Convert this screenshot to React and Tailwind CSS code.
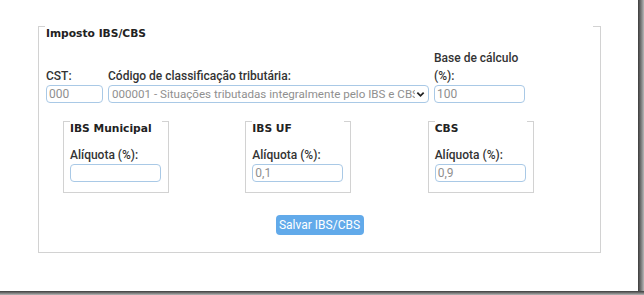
export default function App() {
  const legend = "font-['DejaVu_Sans',Verdana,sans-serif] text-[10.7px] font-bold leading-[14px] text-[#222]";
  const label = "font-['Roboto',sans-serif] text-[12px] font-medium leading-[18px] text-[#333]";
  const input = "h-[18px] border border-[#a9c9e6] rounded-[4px] px-[2px] font-['Roboto',sans-serif] text-[12px] leading-[16px] text-[#8f8f8f] bg-white";

  const taxes = [
    { name: "IBS Municipal", value: "" },
    { name: "IBS UF", value: "0,1" },
    { name: "CBS", value: "0,9" },
  ];

  return (
    <div className="w-[644px] h-[295px] bg-white flex flex-col">
      <div className="flex h-[291px]">
        <div className="w-[638px] h-full pl-[38px] pt-[26px]">
          {/* Imposto IBS/CBS */}
          <div className="w-[563px] h-[227px] border-x border-b border-[#d2d2d2] flex flex-col">
            <div className="flex">
              <div className="w-[6px] border-t border-[#d2d2d2]" />
              <div className="flex-1" />
              <div className="w-[7px] border-t border-[#d2d2d2]" />
            </div>
            <div className="px-[7px] flex flex-col">
              <div className={legend}>Imposto IBS/CBS</div>

              <div className="flex items-end gap-[5px] mt-[8px]">
                <div className="w-[57px] flex flex-col">
                  <span className={label}>CST:</span>
                  <div className={input}>000</div>
                </div>
                <div className="w-[321px] flex flex-col">
                  <span className={label}>Código de classificação tributária:</span>
                  <div className={`${input} pl-[3px] pr-[3px] flex items-center`}>
                    <span className="flex-1 overflow-hidden whitespace-nowrap text-[11.6px]">
                      000001 - Situações tributadas integralmente pelo IBS e CBS
                    </span>
                    <svg width="9" height="7" viewBox="0 0 10 7" className="shrink-0 ml-[1px]">
                      <path d="M1.5 1.5 L5 5 L8.5 1.5" fill="none" stroke="#222" strokeWidth="2" />
                    </svg>
                  </div>
                </div>
                <div className="w-[91px] flex flex-col">
                  <span className={label}>Base de cálculo (%):</span>
                  <div className={input}>100</div>
                </div>
              </div>

              <div className="grid grid-cols-3 mt-[18px]">
                {taxes.map((t) => (
                  <div key={t.name} className="pl-[17px]">
                    <div className="w-[106px] h-[72px] border-x border-b border-[#d2d2d2] flex flex-col">
                      <div className="flex">
                        <div className="w-[6px] border-t border-[#d2d2d2]" />
                        <div className="flex-1" />
                        <div className="w-[6px] border-t border-[#d2d2d2]" />
                      </div>
                      <div className="px-[6px] flex flex-col">
                        <div className={legend}>{t.name}</div>
                        <span className={`${label} leading-[16px] mt-[10px]`}>Alíquota (%):</span>
                        <div className={`${input} w-[91px]`}>{t.value}</div>
                      </div>
                    </div>
                  </div>
                ))}
              </div>

              <div className="flex justify-center mt-[22px]">
                <button className="h-[20px] w-[88px] rounded-[4px] bg-[#62aaea] text-white font-['Roboto',sans-serif] text-[12px] leading-[20px]">
                  Salvar IBS/CBS
                </button>
              </div>
            </div>
          </div>
        </div>
        <div className="w-[6px] h-full bg-gradient-to-r from-[#3c3c3c] to-[#b8b8b8]" />
      </div>
      <div className="h-[4px] bg-gradient-to-b from-[#3c3c3c] to-[#b8b8b8]" />
    </div>
  );
}
